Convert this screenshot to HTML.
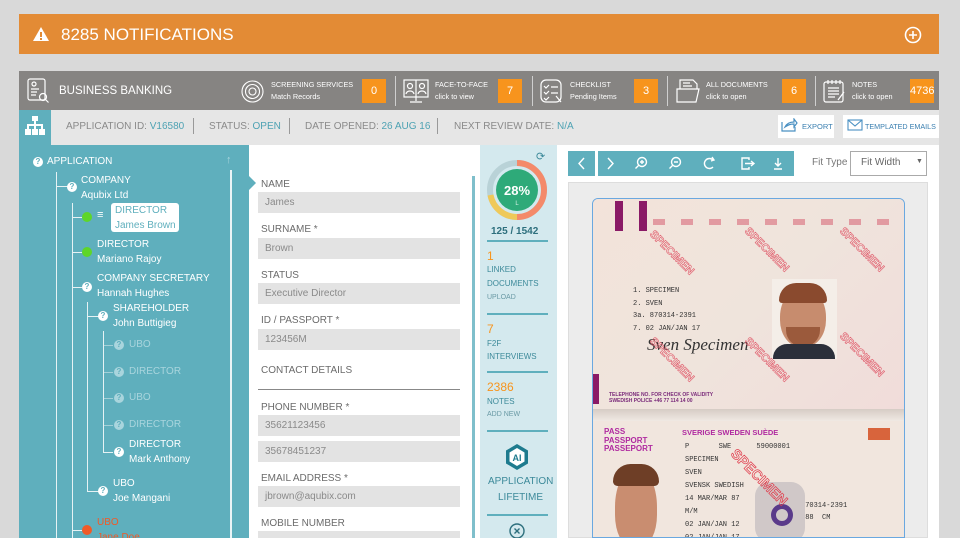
<!DOCTYPE html>
<html><head><meta charset="utf-8"><style>
*{margin:0;padding:0;box-sizing:border-box}
html,body{width:960px;height:538px;overflow:hidden}
body{background:#d9d9d9;font-family:"Liberation Sans",sans-serif;position:relative}
.a{position:absolute}
.t{position:absolute;white-space:nowrap}
.w{color:#fff}
.hd{font-size:7.3px;color:#fff;line-height:12px}
.ob{position:absolute;top:79px;width:24px;height:24px;background:#f7941d;color:#fff;font-size:11px;text-align:center;line-height:24px}
.dv{position:absolute;top:76px;width:1px;height:30px;background:#cfcfcf}
.tr{font-size:10px;color:#fff;line-height:15px;position:absolute;white-space:nowrap}
.q{position:absolute;width:10px;height:10px;border-radius:50%;background:#fff;color:#5fafbd;font-size:8px;font-weight:bold;text-align:center;line-height:10px}
.ln{position:absolute;background:#e6f2f4}
.fd{position:absolute;color:#a9d5dd}
.lb{position:absolute;left:261px;font-size:10px;color:#6b6b6b;white-space:nowrap}
.in{position:absolute;left:258px;width:202px;height:21px;background:#e3e3e3;font-size:10px;color:#8a8a8a;padding-left:7px;line-height:21px}
.st{position:absolute;left:487px;font-size:8px;color:#3d8a9a;white-space:nowrap}
.sl{position:absolute;left:487px;width:61px;height:2px;background:#5fafbd}
.or{position:absolute;left:487px;font-size:12px;color:#f7941d}
.tb{position:absolute;top:151px;height:25px;background:#5fafbd}
</style></head><body>
<div class="a" style="left:19px;top:14px;width:920px;height:40px;background:#e38b35"></div>
<svg class="a" style="left:32px;top:26px" width="18" height="16"><path d="M9 1L17 15H1Z" fill="#fff"/><rect x="8" y="6" width="2" height="5" fill="#e38b35"/><rect x="8" y="12" width="2" height="2" fill="#e38b35"/></svg>
<div class="t w" style="left:61px;top:25px;font-size:17px">8285 NOTIFICATIONS</div>
<svg class="a" style="left:904px;top:26px" width="18" height="18"><circle cx="9" cy="9" r="7.5" fill="none" stroke="#fff" stroke-width="1.6"/><path d="M9 5v8M5 9h8" stroke="#fff" stroke-width="1.6"/></svg>

<div class="a" style="left:19px;top:71px;width:920px;height:39px;background:#868482"></div>
<svg class="a" style="left:27px;top:78px" width="24" height="26" fill="none" stroke="#fff" stroke-width="1.2"><rect x="1" y="1" width="17" height="21" rx="2"/><circle cx="7" cy="6" r="2"/><path d="M4 11h8M4 14h6M4 17h5"/><circle cx="16" cy="19" r="3.5"/><path d="M18.5 21.5l3 3"/></svg>
<div class="t w" style="left:59px;top:85px;font-size:11.5px">BUSINESS BANKING</div>
<svg class="a" style="left:241px;top:80px" width="23" height="23" fill="none" stroke="#fff" stroke-width="1.1"><circle cx="11.5" cy="11.5" r="10.5"/><circle cx="11.5" cy="11.5" r="7"/><circle cx="11.5" cy="11.5" r="3.5"/></svg>
<div class="t hd" style="left:271px;top:79px">SCREENING SERVICES<br>Match Records</div>
<div class="ob" style="left:362px">0</div>
<div class="dv" style="left:395px"></div>
<svg class="a" style="left:403px;top:79px" width="26" height="25" fill="none" stroke="#fff" stroke-width="1.2"><rect x="1" y="1" width="24" height="17"/><path d="M13 1v17"/><circle cx="7" cy="7" r="2.5"/><circle cx="19" cy="7" r="2.5"/><path d="M3 15c1-4 7-4 8 0M15 15c1-4 7-4 8 0M13 18v4M7 23h12"/></svg>
<div class="t hd" style="left:435px;top:79px">FACE-TO-FACE<br>click to view</div>
<div class="ob" style="left:498px">7</div>
<div class="dv" style="left:532px"></div>
<svg class="a" style="left:540px;top:79px" width="24" height="25" fill="none" stroke="#fff" stroke-width="1.2"><rect x="1" y="1" width="20" height="22" rx="5"/><path d="M4 7l2 2 3-3M11 8h7M4 13l2 2 3-3M11 14h7M4 19l2 2 3-3M16 17l5 6"/></svg>
<div class="t hd" style="left:570px;top:79px">CHECKLIST<br>Pending Items</div>
<div class="ob" style="left:634px">3</div>
<div class="dv" style="left:667px"></div>
<svg class="a" style="left:676px;top:79px" width="24" height="25" fill="none" stroke="#fff" stroke-width="1.2"><path d="M4 10V1h13l4 4v5M7 4h7M7 7h9"/><path d="M1 10h22l-3 13H1z"/></svg>
<div class="t hd" style="left:706px;top:79px">ALL DOCUMENTS<br>click to open</div>
<div class="ob" style="left:782px">6</div>
<div class="dv" style="left:815px"></div>
<svg class="a" style="left:823px;top:79px" width="24" height="25" fill="none" stroke="#fff" stroke-width="1.2"><rect x="1" y="3" width="19" height="20" rx="2"/><path d="M5 1v4M9 1v4M13 1v4M17 1v4M5 9h11M5 12h11M5 15h11M5 18h7M21 13l-6 8"/></svg>
<div class="t hd" style="left:852px;top:79px">NOTES<br>click to open</div>
<div class="ob" style="left:910px">4736</div>

<div class="a" style="left:19px;top:110px;width:920px;height:35px;background:#e6e6e6"></div>
<div class="a" style="left:19px;top:110px;width:32px;height:35px;background:#5fafbd"></div>
<svg class="a" style="left:25px;top:116px" width="20" height="20" fill="#fff"><rect x="7" y="0" width="6" height="5"/><rect x="9" y="5" width="2" height="4"/><rect x="2" y="8" width="16" height="2"/><rect x="2" y="8" width="2" height="5"/><rect x="16" y="8" width="2" height="5"/><rect x="9" y="8" width="2" height="5"/><rect x="0" y="13" width="6" height="6"/><rect x="7" y="13" width="6" height="6"/><rect x="14" y="13" width="6" height="6"/></svg>
<div class="t" style="left:66px;top:121px;font-size:10px;color:#8a8a8a">APPLICATION ID: <span style="color:#4ea2b3">V16580</span></div>
<div class="a" style="left:193px;top:118px;width:1px;height:16px;background:#999"></div>
<div class="t" style="left:209px;top:121px;font-size:10px;color:#8a8a8a">STATUS: <span style="color:#4ea2b3">OPEN</span></div>
<div class="a" style="left:289px;top:118px;width:1px;height:16px;background:#999"></div>
<div class="t" style="left:305px;top:121px;font-size:10px;color:#8a8a8a">DATE OPENED: <span style="color:#4ea2b3">26 AUG 16</span></div>
<div class="a" style="left:437px;top:118px;width:1px;height:16px;background:#999"></div>
<div class="t" style="left:454px;top:121px;font-size:10px;color:#8a8a8a">NEXT REVIEW DATE: <span style="color:#4ea2b3">N/A</span></div>
<div class="a" style="left:778px;top:115px;width:56px;height:23px;background:#fff"></div>
<svg class="a" style="left:781px;top:118px" width="17" height="14" fill="none" stroke="#4a90c2" stroke-width="1.2"><path d="M1 4v9h13V9M4 9c2-4 6-5 9-5V1l3 4-3 4V6c-4 0-6 1-9 3z"/></svg>
<div class="t" style="left:802px;top:122px;font-size:7.5px;color:#3a7fb0">EXPORT</div>
<div class="a" style="left:843px;top:115px;width:96px;height:23px;background:#fff"></div>
<svg class="a" style="left:847px;top:119px" width="16" height="12" fill="none" stroke="#4a90c2" stroke-width="1.1"><rect x="1" y="1" width="14" height="10"/><path d="M1 1l7 6 7-6"/></svg>
<div class="t" style="left:865px;top:122px;font-size:7.2px;color:#3a7fb0">TEMPLATED EMAILS</div>

<div class="a" style="left:19px;top:145px;width:230px;height:393px;background:#5fafbd"></div>
<div class="a" style="left:248px;top:172px;width:0;height:0;border-top:8px solid transparent;border-bottom:8px solid transparent;border-left:8px solid #5fafbd"></div>
<div class="a" style="left:230px;top:170px;width:2px;height:368px;background:#eaf4f6"></div>
<div class="t" style="left:226px;top:154px;font-size:11px;color:#a9d5dd">↑</div>
<div class="q" style="left:33px;top:157px">?</div>
<div class="tr" style="left:47px;top:154px">APPLICATION</div>
<div class="ln" style="left:56px;top:172px;width:1px;height:366px"></div>
<div class="ln" style="left:56px;top:186px;width:12px;height:1px"></div>
<div class="q" style="left:67px;top:182px">?</div>
<div class="tr" style="left:81px;top:173px">COMPANY<br>Aqubix Ltd</div>
<div class="ln" style="left:72px;top:203px;width:1px;height:335px"></div>
<div class="ln" style="left:72px;top:217px;width:10px;height:1px"></div>
<div class="a" style="left:82px;top:212px;width:10px;height:10px;border-radius:50%;background:#5ed62a"></div>
<div class="t w" style="left:97px;top:209px;font-size:11px">≡</div>
<div class="a" style="left:111px;top:203px;width:68px;height:29px;background:#fff;border-radius:3px"></div>
<div class="tr" style="left:115px;top:203px;color:#5fafbd">DIRECTOR<br>James Brown</div>
<div class="ln" style="left:72px;top:252px;width:10px;height:1px"></div>
<div class="a" style="left:82px;top:247px;width:10px;height:10px;border-radius:50%;background:#5ed62a"></div>
<div class="tr" style="left:97px;top:237px">DIRECTOR<br>Mariano Rajoy</div>
<div class="ln" style="left:72px;top:287px;width:10px;height:1px"></div>
<div class="q" style="left:82px;top:282px">?</div>
<div class="tr" style="left:97px;top:271px">COMPANY SECRETARY<br>Hannah Hughes</div>
<div class="ln" style="left:87px;top:302px;width:1px;height:189px"></div>
<div class="ln" style="left:87px;top:316px;width:12px;height:1px"></div>
<div class="q" style="left:98px;top:311px">?</div>
<div class="tr" style="left:113px;top:301px">SHAREHOLDER<br>John Buttigieg</div>
<div class="ln" style="left:103px;top:331px;width:1px;height:122px"></div>
<div class="ln" style="left:103px;top:345px;width:10px;height:1px;opacity:.5"></div>
<div class="q" style="left:114px;top:340px;background:#a9d5dd">?</div><div class="tr fd" style="left:129px;top:337px">UBO</div>
<div class="ln" style="left:103px;top:372px;width:10px;height:1px;opacity:.5"></div>
<div class="q" style="left:114px;top:367px;background:#a9d5dd">?</div><div class="tr fd" style="left:129px;top:364px">DIRECTOR</div>
<div class="ln" style="left:103px;top:398px;width:10px;height:1px;opacity:.5"></div>
<div class="q" style="left:114px;top:393px;background:#a9d5dd">?</div><div class="tr fd" style="left:129px;top:390px">UBO</div>
<div class="ln" style="left:103px;top:425px;width:10px;height:1px;opacity:.5"></div>
<div class="q" style="left:114px;top:420px;background:#a9d5dd">?</div><div class="tr fd" style="left:129px;top:417px">DIRECTOR</div>
<div class="ln" style="left:103px;top:452px;width:10px;height:1px"></div>
<div class="q" style="left:114px;top:447px">?</div>
<div class="tr" style="left:129px;top:437px">DIRECTOR<br>Mark Anthony</div>
<div class="ln" style="left:87px;top:491px;width:12px;height:1px"></div>
<div class="q" style="left:98px;top:486px">?</div>
<div class="tr" style="left:113px;top:476px">UBO<br>Joe Mangani</div>
<div class="ln" style="left:72px;top:530px;width:10px;height:1px"></div>
<div class="a" style="left:82px;top:525px;width:10px;height:10px;border-radius:50%;background:#f05a28"></div>
<div class="tr" style="left:97px;top:515px;color:#f05a28">UBO<br>Jane Doe</div>

<div class="a" style="left:249px;top:145px;width:231px;height:393px;background:#fff"></div>
<div class="a" style="left:249px;top:176px;width:0;height:0;border-top:7px solid transparent;border-bottom:7px solid transparent;border-left:7px solid #5fafbd"></div>
<div class="a" style="left:472px;top:176px;width:3px;height:362px;background:#7fbfcb"></div>
<div class="lb" style="top:179px">NAME</div><div class="in" style="top:192px">James</div>
<div class="lb" style="top:224px">SURNAME *</div><div class="in" style="top:238px">Brown</div>
<div class="lb" style="top:270px">STATUS</div><div class="in" style="top:283px">Executive Director</div>
<div class="lb" style="top:315px">ID / PASSPORT *</div><div class="in" style="top:329px">123456M</div>
<div class="lb" style="top:365px">CONTACT DETAILS</div>
<div class="a" style="left:258px;top:389px;width:202px;height:1px;background:#888"></div>
<div class="lb" style="top:402px">PHONE NUMBER *</div><div class="in" style="top:415px">35621123456</div>
<div class="in" style="top:441px">35678451237</div>
<div class="lb" style="top:473px">EMAIL ADDRESS *</div><div class="in" style="top:486px">jbrown@aqubix.com</div>
<div class="lb" style="top:518px">MOBILE NUMBER</div><div class="in" style="top:531px;height:7px"></div>

<div class="a" style="left:480px;top:145px;width:77px;height:393px;background:#d4e9ee"></div>
<div class="t" style="left:536px;top:150px;font-size:11px;color:#3d8a9a">⟳</div>
<svg class="a" style="left:486px;top:159px" width="62" height="62"><circle cx="31" cy="31" r="27" fill="none" stroke="#b9d2d7" stroke-width="6"/><path d="M31 4A27 27 0 0 1 31 58" fill="none" stroke="#f48a6a" stroke-width="6"/><path d="M31 58A27 27 0 0 1 4.5 36" fill="none" stroke="#f5c84b" stroke-width="6" opacity=".9"/><circle cx="31" cy="31" r="21" fill="#2eaa79"/><text x="31" y="36" fill="#fff" font-size="13" font-weight="bold" text-anchor="middle" font-family="Liberation Sans">28%</text><text x="31" y="46" fill="#d8f2e6" font-size="6" text-anchor="middle" font-family="Liberation Sans">L</text></svg>
<div class="t" style="left:491px;top:226px;font-size:10px;color:#2d6f7d;font-weight:bold">125 / 1542</div>
<div class="sl" style="top:240px"></div>
<div class="or" style="top:249px">1</div>
<div class="st" style="top:265px">LINKED</div>
<div class="st" style="top:279px">DOCUMENTS</div>
<div class="st" style="top:294px;font-size:7px;color:#6a9aa5">UPLOAD</div>
<div class="sl" style="top:313px"></div>
<div class="or" style="top:322px">7</div>
<div class="st" style="top:339px">F2F</div>
<div class="st" style="top:352px">INTERVIEWS</div>
<div class="sl" style="top:371px"></div>
<div class="or" style="top:380px">2386</div>
<div class="st" style="top:397px">NOTES</div>
<div class="st" style="top:411px;font-size:7px;color:#6a9aa5">ADD NEW</div>
<div class="sl" style="top:430px"></div>
<svg class="a" style="left:505px;top:443px" width="24" height="28"><path d="M12 1L23 7.5V20.5L12 27L1 20.5V7.5Z" fill="#1e7b8e"/><path d="M12 5L19.5 9.5V18.5L12 23L4.5 18.5V9.5Z" fill="#fff"/><text x="12" y="18" font-size="9" font-weight="bold" fill="#1e7b8e" text-anchor="middle" font-family="Liberation Sans">AI</text></svg>
<div class="t" style="left:488px;top:476px;font-size:10px;color:#3d8a9a">APPLICATION</div>
<div class="t" style="left:498px;top:492px;font-size:10px;color:#3d8a9a">LIFETIME</div>
<div class="sl" style="top:514px"></div>
<svg class="a" style="left:509px;top:523px" width="16" height="16" fill="none" stroke="#2d6f7d" stroke-width="1.4"><circle cx="8" cy="8" r="7"/><path d="M5.5 5.5l5 5M10.5 5.5l-5 5"/></svg>

<div class="a" style="left:557px;top:145px;width:382px;height:393px;background:#fff"></div>
<div class="tb" style="left:568px;width:27px"></div>
<div class="tb" style="left:598px;width:196px"></div>
<svg class="a" style="left:568px;top:151px" width="226" height="25" fill="none" stroke="#fff" stroke-width="1.4"><path d="M16 7l-5 5.5 5 5.5"/><path d="M40 7l5 5.5-5 5.5"/><circle cx="74" cy="11" r="4.5"/><path d="M70.5 14.5l-3 3M74 9v4M72 11h4"/><circle cx="108" cy="11" r="4.5"/><path d="M104.5 14.5l-3 3M106 11h4"/><path d="M145 9a5 5 0 1 0 0 7" /><path d="M144 6l2 3-3 1"/><path d="M181 9v-2h-7v11h7v-2M177 12.5h9M183 10l3 2.5-3 2.5"/><path d="M210 7v8M207 12l3 3 3-3M206 18h8"/></svg>
<div class="t" style="left:812px;top:157px;font-size:10px;color:#777">Fit Type</div>
<div class="a" style="left:850px;top:151px;width:77px;height:25px;border:1px solid #aaa;background:#fff"></div>
<div class="t" style="left:861px;top:157px;font-size:10px;color:#666">Fit Width</div>
<div class="t" style="left:916px;top:158px;font-size:7px;color:#666">▼</div>
<div class="a" style="left:568px;top:182px;width:360px;height:356px;background:#ececec;border:1px solid #ddd"></div>

<div class="a" style="left:592px;top:198px;width:313px;height:340px;border:1.5px solid #6aa8e0;border-radius:6px 6px 0 0;overflow:hidden;background:#f1e6de">
 <div class="a" style="left:0;top:0;width:313px;height:212px;background:linear-gradient(135deg,#f3e3da,#efe4dc 50%,#f1dcda)"></div>
 <div class="a" style="left:22px;top:2px;width:8px;height:30px;background:#8a1a66"></div>
 <div class="a" style="left:46px;top:2px;width:8px;height:30px;background:#8a1a66"></div>
 <div class="a" style="left:0;top:175px;width:6px;height:30px;background:#8a1a66"></div>
 <div class="a" style="left:60px;top:20px;width:240px;height:6px;background:repeating-linear-gradient(90deg,#d86a7a 0 12px,transparent 12px 28px);opacity:.6"></div>
 <div class="t" style="left:40px;top:86px;font:7px 'Liberation Mono',monospace;color:#333;line-height:12.5px">1. SPECIMEN<br>2. SVEN<br>3a. 870314-2391<br>7. 02 JAN/JAN 17</div>
 <div class="t" style="left:54px;top:136px;font:italic 17px 'Liberation Serif',serif;color:#333">Sven Specimen</div>
 <div class="a" style="left:179px;top:80px;width:65px;height:80px;background:#f4eee8"></div>
 <div class="a" style="left:187px;top:88px;width:46px;height:60px;border-radius:50% 50% 45% 45%;background:#c78c6e"></div>
 <div class="a" style="left:186px;top:84px;width:48px;height:20px;border-radius:24px 24px 4px 4px;background:#8a4a2e"></div>
 <div class="a" style="left:193px;top:128px;width:34px;height:20px;border-radius:0 0 17px 17px;background:#9b5a3c"></div>
 <div class="a" style="left:180px;top:145px;width:62px;height:15px;border-radius:14px 14px 0 0;background:#2b2f3a"></div>
 <div class="t" style="left:16px;top:193px;font-size:5px;color:#7a2a7a;font-weight:bold">TELEPHONE NO. FOR CHECK OF VALIDITY<br>SWEDISH POLICE +46 77 114 14 00</div>
 <div class="t" style="left:50px;top:48px;transform:rotate(45deg);font-size:11px;font-weight:bold;color:transparent;-webkit-text-stroke:.6px #e05a6a">SPECIMEN</div>
 <div class="t" style="left:145px;top:45px;transform:rotate(45deg);font-size:11px;font-weight:bold;color:transparent;-webkit-text-stroke:.6px #e05a6a">SPECIMEN</div>
 <div class="t" style="left:240px;top:45px;transform:rotate(45deg);font-size:11px;font-weight:bold;color:transparent;-webkit-text-stroke:.6px #e05a6a">SPECIMEN</div>
 <div class="t" style="left:50px;top:155px;transform:rotate(45deg);font-size:11px;font-weight:bold;color:transparent;-webkit-text-stroke:.6px #e05a6a">SPECIMEN</div>
 <div class="t" style="left:145px;top:155px;transform:rotate(45deg);font-size:11px;font-weight:bold;color:transparent;-webkit-text-stroke:.6px #e05a6a">SPECIMEN</div>
 <div class="t" style="left:240px;top:150px;transform:rotate(45deg);font-size:11px;font-weight:bold;color:transparent;-webkit-text-stroke:.6px #e05a6a">SPECIMEN</div>
 <div class="a" style="left:0;top:210px;width:313px;height:12px;background:linear-gradient(#d6ccc5,#f0e9e3)"></div>
 <div class="t" style="left:11px;top:229px;font-size:8px;font-weight:bold;color:#b02aa0;line-height:8.5px">PASS<br>PASSPORT<br>PASSEPORT</div>
 <div class="t" style="left:89px;top:229px;font-size:7.5px;font-weight:bold;color:#b02aa0">SVERIGE SWEDEN SUÈDE</div>
 <div class="a" style="left:275px;top:229px;width:22px;height:12px;background:#d8643c"></div>
 <div class="t" style="left:92px;top:242px;font:7px 'Liberation Mono',monospace;color:#333;line-height:13px">P &nbsp;&nbsp;&nbsp;&nbsp;&nbsp; SWE &nbsp;&nbsp;&nbsp;&nbsp; 59000001<br>SPECIMEN<br>SVEN<br>SVENSK SWEDISH<br>14 MAR/MAR 87<br>M/M<br>02 JAN/JAN 12<br>02 JAN/JAN 17</div>
 <div class="t" style="left:208px;top:301px;font:7px 'Liberation Mono',monospace;color:#333;line-height:12px">870314-2391<br>188 &nbsp;CM</div>
 <div class="a" style="left:162px;top:283px;width:50px;height:60px;border-radius:14px;background:#d0c8c8"></div>
 <div class="a" style="left:178px;top:305px;width:22px;height:22px;border-radius:50%;border:5px solid #5a3a8a"></div>
 <div class="a" style="left:22px;top:268px;width:42px;height:80px;border-radius:50% 50% 40% 40%;background:#c98d70"></div>
 <div class="a" style="left:20px;top:265px;width:46px;height:22px;border-radius:23px 23px 6px 6px;background:#6e3e26"></div>
 <div class="t" style="left:130px;top:270px;transform:rotate(45deg);font-size:14px;font-weight:bold;color:transparent;-webkit-text-stroke:.7px #e03a4a">SPECIMEN</div>
</div>
</body></html>
